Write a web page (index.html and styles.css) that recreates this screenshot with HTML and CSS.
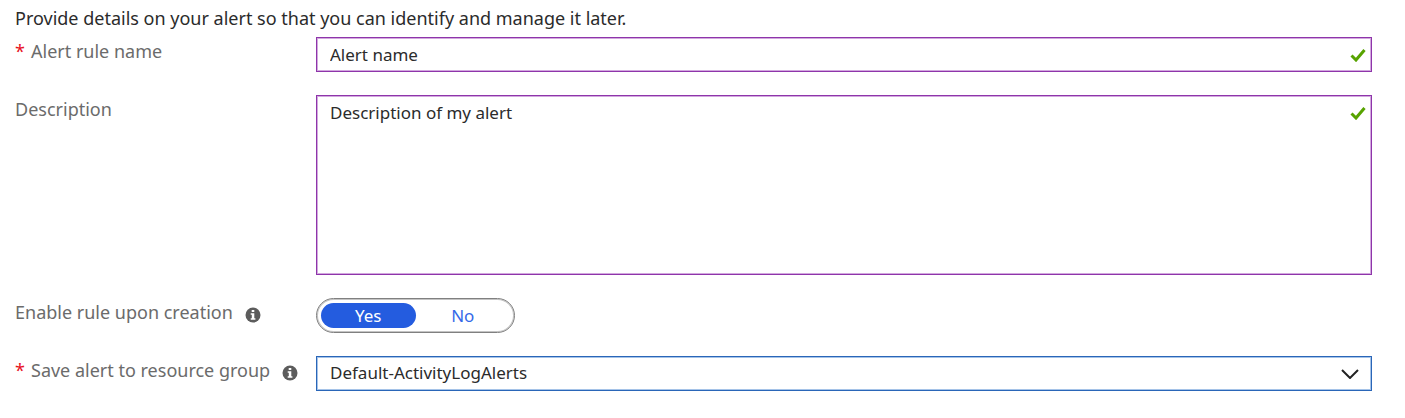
FILE: index.html
```html
<!DOCTYPE html>
<html lang="en">
<head>
<meta charset="utf-8">
<title>Alert details</title>
<link rel="stylesheet" href="styles.css">
</head>
<body>
<form class="alert-form">
  <p class="intro">Provide details on your alert so that you can identify and manage it later.</p>

  <div class="row">
    <label class="label" for="rule-name"><span class="required">*</span>Alert rule name</label>
    <div class="control">
      <input class="field" id="rule-name" type="text" value="Alert name" required>
      <svg class="check" viewBox="0 0 16 14" aria-hidden="true"><path d="M1.500 7.500 6 12 14.500 2"/></svg>
    </div>
  </div>

  <div class="row">
    <label class="label" for="description">Description</label>
    <div class="control">
      <textarea class="field field-area" id="description">Description of my alert</textarea>
      <svg class="check" viewBox="0 0 16 14" aria-hidden="true"><path d="M1.500 7.500 6 12 14.500 2"/></svg>
    </div>
  </div>

  <div class="row">
    <div class="label" id="enable-label">Enable rule upon creation
      <svg class="info" viewBox="0 0 16 16" aria-hidden="true"><circle cx="8" cy="8" r="7.500"/><path d="M6.700 3h2.600v2H6.700zM5.700 6.300h3.600v5h1.100v1.400H5.700v-1.400h1.100V7.700H5.700z"/></svg>
    </div>
    <div class="toggle" role="radiogroup" aria-labelledby="enable-label">
      <input class="toggle-input" type="radio" name="enable" id="enable-yes" checked><label class="option" for="enable-yes">Yes</label>
      <input class="toggle-input" type="radio" name="enable" id="enable-no"><label class="option" for="enable-no">No</label>
    </div>
  </div>

  <div class="row">
    <label class="label" for="group"><span class="required">*</span>Save alert to resource group
      <svg class="info" viewBox="0 0 16 16" aria-hidden="true"><circle cx="8" cy="8" r="7.500"/><path d="M6.700 3h2.600v2H6.700zM5.700 6.300h3.600v5h1.100v1.400H5.700v-1.400h1.100V7.700H5.700z"/></svg>
    </label>
    <div class="control">
      <select class="field field-select" id="group"><option>Default-ActivityLogAlerts</option></select>
      <svg class="chevron" viewBox="0 0 18 10" aria-hidden="true"><path d="M1 1l8 8 8-8"/></svg>
    </div>
  </div>
</form>
</body>
</html>
```
FILE: styles.css
```css
* {
  box-sizing: border-box;
}

body {
  margin: 0;
  background: #fff;
  color: #2b2b2b;
  font-family: "Noto Sans", "Open Sans", sans-serif;
  font-size: 18px;
  line-height: 24px;
}

.alert-form {
  display: flex;
  flex-direction: column;
  gap: 23px;
  padding: 6px 33px 24px 15px;
}

.intro {
  margin: 0 0 -16px;
}

.row {
  display: grid;
  grid-template-columns: 301px 1fr;
  align-items: start;
}

.label {
  display: flex;
  align-items: center;
  padding-top: 2px;
  color: #6b6b6b;
}

.required {
  width: 16px;
  color: #e81123;
}

.info {
  width: 16px;
  height: 16px;
  margin: 6px 0 0 12px;
}

.info circle {
  fill: #5c5c5c;
}

.info path {
  fill: #fff;
}

.control {
  position: relative;
}

.field {
  display: block;
  width: 100%;
  height: 35px;
  margin: 0;
  padding: 5px 40px 5px 13px;
  border: 1px solid #8e35aa;
  border-radius: 0;
  outline: 0;
  box-shadow: inset 0 0 0 1px #d2a8de;
  background: #fff;
  color: #2b2b2b;
  font: inherit;
  font-size: 17px;
}

.field-area {
  height: 180px;
  resize: none;
}

.field-select {
  padding-top: 3px;
  appearance: none;
  border-color: #2a66b8;
  box-shadow: inset 0 0 0 1px #a5c3e8;
}

.check {
  position: absolute;
  top: 11px;
  right: 6px;
  width: 16px;
  height: 14px;
  fill: none;
  stroke: #57a300;
  stroke-width: 3;
}

.chevron {
  position: absolute;
  top: 13px;
  right: 13px;
  width: 18px;
  height: 10px;
  fill: none;
  stroke: #222;
  stroke-width: 2;
  pointer-events: none;
}

.toggle {
  position: relative;
  display: flex;
  width: 199px;
  height: 35px;
  padding: 4px;
  border: 1px solid #808080;
  border-radius: 18px;
  box-shadow: inset 0 0 0 1px #c4c4c4;
}

.toggle-input {
  position: absolute;
  opacity: 0;
}

.option {
  flex: 1;
  border-radius: 13px;
  color: #3569e8;
  font-size: 17px;
  line-height: 26px;
  text-align: center;
}

.toggle-input:checked + .option {
  background: #245cdf;
  color: #fff;
}
```
